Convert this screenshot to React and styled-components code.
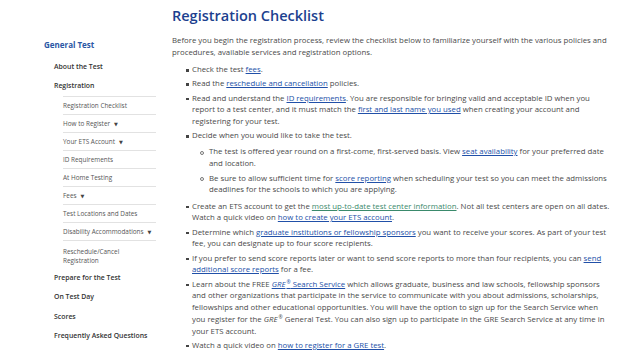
import React from "react";
import styled, { createGlobalStyle } from "styled-components";

const GlobalStyle = createGlobalStyle`
  html, body {
    margin: 0;
    padding: 0;
    background: #fff;
    font-family: "Open Sans", "Liberation Sans", sans-serif;
    color: #4a4a4a;
  }
`;

const Page = styled.div`
  width: 640px;
  height: 350px;
  overflow: hidden;
  display: grid;
  grid-template-columns: 112px 439px;
  column-gap: 16px;
  padding-left: 44px;
  box-sizing: border-box;
`;

const Sidebar = styled.nav`
  padding-top: 39px;
`;

const SideTitle = styled.div`
  font-size: 8px;
  font-weight: 700;
  color: #2b57a5;
  line-height: 11px;
  margin-bottom: 12px;
`;

const TopItem = styled.div`
  font-size: 6.9px;
  font-weight: 600;
  color: #333;
  padding-left: 10px;
  height: 19.3px;
  line-height: 10px;
`;

const SubList = styled.ul`
  list-style: none;
  margin: -5px 0 4px 19px;
  padding: 0;
`;

const SubItem = styled.li`
  font-size: 6.4px;
  color: #555;
  border-top: 1px solid #e2e2e2;
  padding: 4px 0 4px;
  line-height: 9px;
  height: 9px;
  &:last-child {
    height: auto;
    padding-top: 6.5px;
  }
`;

const Caret = styled.span`
  font-family: "DejaVu Sans", sans-serif;
  font-size: 5px;
  line-height: 0;
  margin-left: 4px;
  color: #444;
`;

const SideFooter = styled.div`
  margin-right: 5px;
  border-bottom: 2px solid #3f6cc4;
  padding-bottom: 4px;
`;

const Main = styled.main`
  padding-top: 5px;
`;

const Title = styled.h1`
  font-size: 14.5px;
  font-weight: 600;
  color: #1c3f8f;
  margin: 0 0 7px;
  line-height: 22px;
`;

const Intro = styled.p`
  font-size: 7.8px;
  line-height: 12px;
  margin: 0 0 6px;
`;

const List = styled.ul`
  margin: 0;
  padding-left: 20px;
  font-size: 7.8px;
  line-height: 11.75px;
  list-style: none;
`;

const Item = styled.li`
  position: relative;
  margin-bottom: 2.5px;
  &::before {
    content: "";
    position: absolute;
    left: -6px;
    top: 5px;
    width: 2.5px;
    height: 2.5px;
    background: #444;
  }
`;

const SubBullets = styled.ul`
  margin: 4px 0 4.5px;
  padding-left: 17px;
  list-style: none;
`;

const SubItem2 = styled.li`
  position: relative;
  margin-bottom: 3px;
  &::before {
    content: "";
    position: absolute;
    left: -9px;
    top: 4.5px;
    width: 2px;
    height: 2px;
    border: 0.8px solid #777;
    border-radius: 50%;
  }
`;

const Link = styled.a`
  color: ${(p) => (p.$visited ? "#3a8a6c" : "#2150a8")};
  text-decoration: underline;
`;

const Em = styled.i`
  font-style: italic;
`;

const Reg = styled.span`
  font-size: 5px;
  line-height: 0;
  position: relative;
  top: -3px;
  margin-left: 1px;
`;

const sideSubs = [
  ["Registration Checklist", false],
  ["How to Register", true],
  ["Your ETS Account", true],
  ["ID Requirements", false],
  ["At Home Testing", false],
  ["Fees", true],
  ["Test Locations and Dates", false],
  ["Disability Accommodations", true],
  ["Reschedule/Cancel Registration", false],
];

export default function App() {
  return (
    <>
      <GlobalStyle />
      <Page>
        <Sidebar>
          <SideTitle>General Test</SideTitle>
          <TopItem>About the Test</TopItem>
          <TopItem>Registration</TopItem>
          <SubList>
            {sideSubs.map(([label, caret]) => (
              <SubItem key={label}>
                {label}
                {caret && <Caret>▼</Caret>}
              </SubItem>
            ))}
          </SubList>
          <SideFooter>
            <TopItem>Prepare for the Test</TopItem>
            <TopItem>On Test Day</TopItem>
            <TopItem>Scores</TopItem>
            <TopItem>Frequently Asked Questions</TopItem>
          </SideFooter>
        </Sidebar>
        <Main>
          <Title>Registration Checklist</Title>
          <Intro>
            Before you begin the registration process, review the checklist below to familiarize yourself with the various policies and
            procedures, available services and registration options.
          </Intro>
          <List>
            <Item>
              Check the test <Link>fees</Link>.
            </Item>
            <Item>
              Read the <Link>reschedule and cancellation</Link> policies.
            </Item>
            <Item>
              Read and understand the <Link>ID requirements</Link>. You are responsible for bringing valid and acceptable ID when you
              report to a test center, and it must match the <Link>first and last name you used</Link> when creating your account and
              registering for your test.
            </Item>
            <Item>
              Decide when you would like to take the test.
              <SubBullets>
                <SubItem2>
                  The test is offered year round on a first-come, first-served basis. View <Link>seat availability</Link> for your
                  preferred date and location.
                </SubItem2>
                <SubItem2>
                  Be sure to allow sufficient time for <Link>score reporting</Link> when scheduling your test so you can meet the
                  admissions deadlines for the schools to which you are applying.
                </SubItem2>
              </SubBullets>
            </Item>
            <Item>
              Create an ETS account to get the <Link $visited>most up-to-date test center information</Link>. Not all test centers are
              open on all dates. Watch a quick video on <Link>how to create your ETS account</Link>.
            </Item>
            <Item>
              Determine which <Link>graduate institutions or fellowship sponsors</Link> you want to receive your scores. As part of your
              test fee, you can designate up to four score recipients.
            </Item>
            <Item>
              If you prefer to send score reports later or want to send score reports to more than four recipients, you can{" "}
              <Link>send additional score reports</Link> for a fee.
            </Item>
            <Item>
              Learn about the FREE{" "}
              <Link>
                <Em>GRE</Em>
                <Reg>®</Reg> Search Service
              </Link>{" "}
              which allows graduate, business and law schools, fellowship sponsors and other organizations that participate in the
              service to communicate with you about admissions, scholarships, fellowships and other educational opportunities. You will
              have the option to sign up for the Search Service when you register for the <Em>GRE</Em>
              <Reg>®</Reg> General Test. You can also sign up to participate in the GRE Search Service at any time in your ETS account.
            </Item>
            <Item>
              Watch a quick video on <Link>how to register for a GRE test</Link>.
            </Item>
          </List>
        </Main>
      </Page>
    </>
  );
}
